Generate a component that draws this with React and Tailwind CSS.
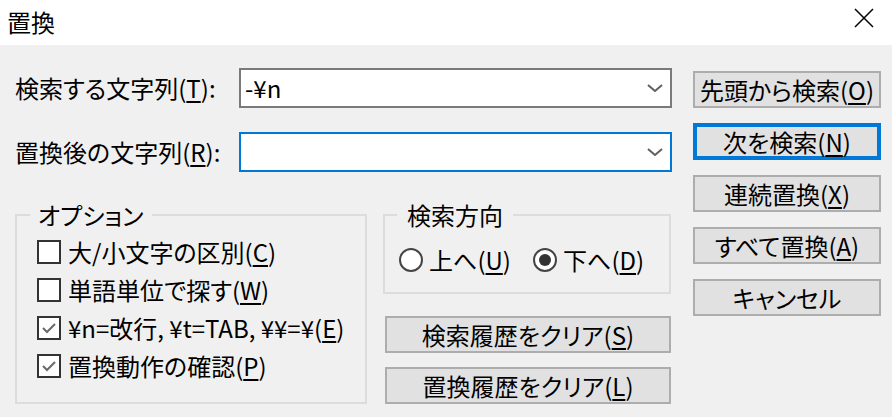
import React from 'react';

// mnemonic label: text(K)suffix with K underlined
function Mn({ text, k, suffix = '' }) {
  return (
    <>
      {text}(<span className="underline underline-offset-[3px] decoration-[2px]">{k}</span>){suffix}
    </>
  );
}

function Chevron() {
  return (
    <svg width="16" height="8" viewBox="0 0 16 8" className="shrink-0">
      <path d="M1 1 L8 7 L15 1" stroke="#606060" strokeWidth="2" fill="none" />
    </svg>
  );
}

function Combo({ value, focused }) {
  return (
    <div
      className={`flex h-[40px] w-[433px] items-center border-2 bg-white pl-[4px] pr-[7px] ${
        focused ? 'border-[#0078d7]' : 'border-[#7a7a7a]'
      }`}
    >
      <span className="flex-1">{value}</span>
      <Chevron />
    </div>
  );
}

function Btn({ children, focused }) {
  return (
    <button
      className={`flex h-[37px] w-full items-center justify-center bg-[#e1e1e1] text-black ${
        focused ? 'border-4 border-[#0078d7]' : 'border-2 border-[#adadad]'
      }`}
    >
      <span>{children}</span>
    </button>
  );
}

function Check({ checked, children }) {
  return (
    <div className="flex h-[38px] items-center gap-[7px]">
      <div className="flex h-[24px] w-[24px] items-center justify-center border-2 border-[#333333] bg-white">
        {checked && (
          <svg width="18" height="18" viewBox="0 0 18 18">
            <path d="M3 9 L7 13 L15 5" stroke="#6a6a6a" strokeWidth="2" fill="none" />
          </svg>
        )}
      </div>
      <span>{children}</span>
    </div>
  );
}

function Radio({ checked, children, className = '' }) {
  return (
    <div className={`flex h-[38px] items-center gap-[6px] ${className}`}>
      <div className="flex h-[24px] w-[24px] items-center justify-center rounded-full border-2 border-[#444444] bg-white">
        {checked && <div className="h-[12px] w-[12px] rounded-full bg-[#333333]" />}
      </div>
      <span>{children}</span>
    </div>
  );
}

export default function App() {
  return (
    <div className="flex h-[417px] w-[892px] flex-col overflow-hidden bg-[#f0f0f0] font-['Noto_Sans_CJK_JP',sans-serif] text-[24px] leading-[24px] text-black [font-feature-settings:'palt']">
      {/* title bar */}
      <div className="flex h-[45px] items-start justify-between bg-white pl-[7px] pr-[18px] pt-[8px]">
        <span className="mt-[2px]">置換</span>
        <svg width="20" height="20" viewBox="0 0 20 20">
          <path d="M1 1 L19 19 M19 1 L1 19" stroke="#000" strokeWidth="1.5" fill="none" />
        </svg>
      </div>

      <div className="flex gap-[21px] pl-[15px] pt-[23px]">
        {/* left column */}
        <div className="flex w-[657px] flex-col">
          <div className="flex h-[40px] items-center">
            <span className="w-[224px]">
              <Mn text="検索する文字列" k="T" suffix=":" />
            </span>
            <Combo value="-¥n" />
          </div>
          <div className="mt-[24px] flex h-[40px] items-center">
            <span className="w-[224px]">
              <Mn text="置換後の文字列" k="R" suffix=":" />
            </span>
            <Combo value="" focused />
          </div>

          <div className="mt-[31px] flex gap-[16px]">
            <fieldset className="w-[352px] border-2 border-[#dcdcdc] pb-[15px] pl-[13px] pt-[6px]">
              <legend className="px-[8px]">オプション</legend>
              <div className="ml-[7px] flex flex-col">
                <Check>
                  <Mn text="大/小文字の区別" k="C" />
                </Check>
                <Check>
                  <Mn text="単語単位で探す" k="W" />
                </Check>
                <Check checked>
                  <Mn text="¥n=改行, ¥t=TAB, ¥¥=¥" k="E" />
                </Check>
                <Check checked>
                  <Mn text="置換動作の確認" k="P" />
                </Check>
              </div>
            </fieldset>

            <div className="flex w-[288px] flex-col">
              <fieldset className="border-2 border-[#dcdcdc] pb-[13px] pl-[12px] pt-[14px]">
                <legend className="px-[10px]">検索方向</legend>
                <div className="ml-[2px] flex">
                  <Radio className="w-[134px]">
                    <Mn text="上へ" k="U" />
                  </Radio>
                  <Radio checked>
                    <Mn text="下へ" k="D" />
                  </Radio>
                </div>
              </fieldset>
              <div className="mt-[22px] flex flex-col gap-[14px] pl-[2px]">
                <Btn>
                  <Mn text="検索履歴をクリア" k="S" />
                </Btn>
                <Btn>
                  <Mn text="置換履歴をクリア" k="L" />
                </Btn>
              </div>
            </div>
          </div>
        </div>

        {/* right column */}
        <div className="mt-[3px] flex w-[188px] flex-col gap-[15px]">
          <Btn>
            <Mn text="先頭から検索" k="O" />
          </Btn>
          <Btn focused>
            <Mn text="次を検索" k="N" />
          </Btn>
          <Btn>
            <Mn text="連続置換" k="X" />
          </Btn>
          <Btn>
            <Mn text="すべて置換" k="A" />
          </Btn>
          <Btn>キャンセル</Btn>
        </div>
      </div>
    </div>
  );
}
